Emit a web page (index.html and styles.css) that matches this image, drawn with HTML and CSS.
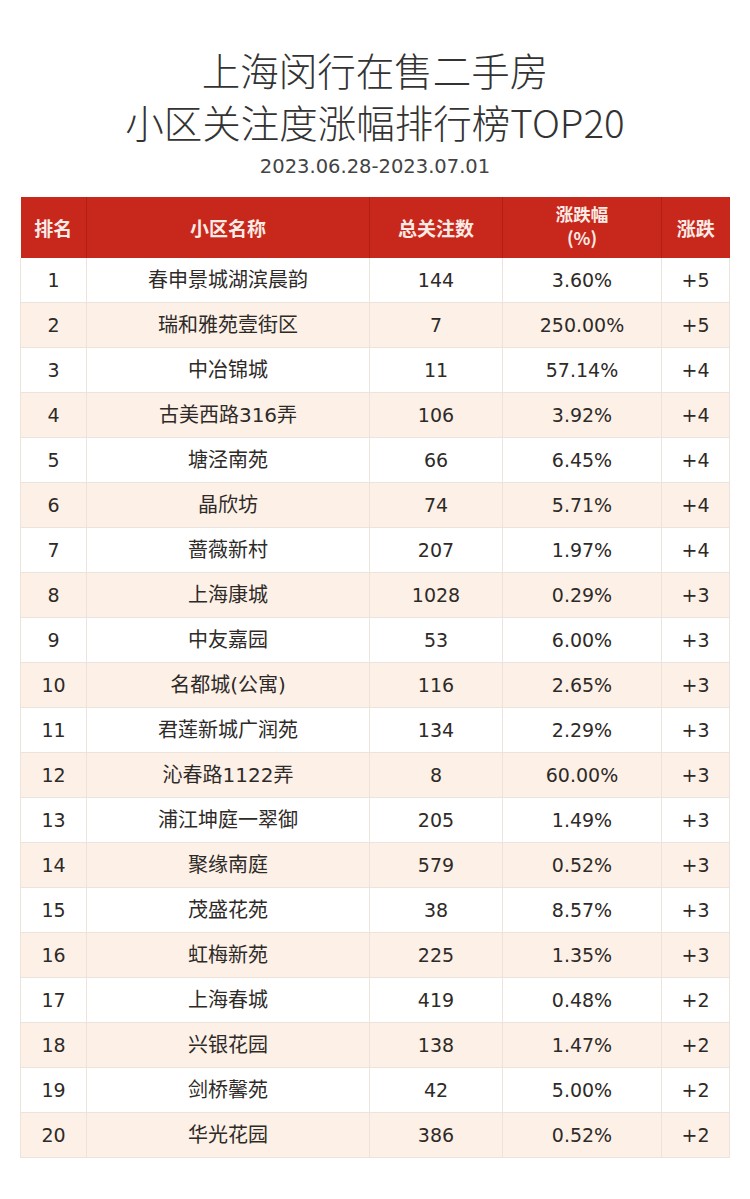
FILE: index.html
```html
<!DOCTYPE html>
<html lang="zh-CN">
<head>
<meta charset="utf-8">
<title>上海闵行在售二手房小区关注度涨幅排行榜TOP20</title>
<link rel="stylesheet" href="styles.css">
</head>
<body>
<div class="page">
  <h1 class="title">上海闵行在售二手房<br>小区关注度涨幅排行榜TOP20</h1>
  <div class="date">2023.06.28-2023.07.01</div>
  <table class="rank">
    <colgroup>
      <col class="c1"><col class="c2"><col class="c3"><col class="c4"><col class="c5">
    </colgroup>
    <thead>
      <tr><th>排名</th><th>小区名称</th><th>总关注数</th><th><div class="two"><span>涨跌幅</span><span>(%)</span></div></th><th>涨跌</th></tr>
    </thead>
    <tbody>
      <tr><td>1</td><td class="name">春申景城湖滨晨韵</td><td>144</td><td>3.60%</td><td>+5</td></tr>
      <tr><td>2</td><td class="name">瑞和雅苑壹街区</td><td>7</td><td>250.00%</td><td>+5</td></tr>
      <tr><td>3</td><td class="name">中冶锦城</td><td>11</td><td>57.14%</td><td>+4</td></tr>
      <tr><td>4</td><td class="name">古美西路316弄</td><td>106</td><td>3.92%</td><td>+4</td></tr>
      <tr><td>5</td><td class="name">塘泾南苑</td><td>66</td><td>6.45%</td><td>+4</td></tr>
      <tr><td>6</td><td class="name">晶欣坊</td><td>74</td><td>5.71%</td><td>+4</td></tr>
      <tr><td>7</td><td class="name">蔷薇新村</td><td>207</td><td>1.97%</td><td>+4</td></tr>
      <tr><td>8</td><td class="name">上海康城</td><td>1028</td><td>0.29%</td><td>+3</td></tr>
      <tr><td>9</td><td class="name">中友嘉园</td><td>53</td><td>6.00%</td><td>+3</td></tr>
      <tr><td>10</td><td class="name">名都城(公寓)</td><td>116</td><td>2.65%</td><td>+3</td></tr>
      <tr><td>11</td><td class="name">君莲新城广润苑</td><td>134</td><td>2.29%</td><td>+3</td></tr>
      <tr><td>12</td><td class="name">沁春路1122弄</td><td>8</td><td>60.00%</td><td>+3</td></tr>
      <tr><td>13</td><td class="name">浦江坤庭一翠御</td><td>205</td><td>1.49%</td><td>+3</td></tr>
      <tr><td>14</td><td class="name">聚缘南庭</td><td>579</td><td>0.52%</td><td>+3</td></tr>
      <tr><td>15</td><td class="name">茂盛花苑</td><td>38</td><td>8.57%</td><td>+3</td></tr>
      <tr><td>16</td><td class="name">虹梅新苑</td><td>225</td><td>1.35%</td><td>+3</td></tr>
      <tr><td>17</td><td class="name">上海春城</td><td>419</td><td>0.48%</td><td>+2</td></tr>
      <tr><td>18</td><td class="name">兴银花园</td><td>138</td><td>1.47%</td><td>+2</td></tr>
      <tr><td>19</td><td class="name">剑桥馨苑</td><td>42</td><td>5.00%</td><td>+2</td></tr>
      <tr><td>20</td><td class="name">华光花园</td><td>386</td><td>0.52%</td><td>+2</td></tr>
    </tbody>
  </table>
</div>
</body>
</html>
```

FILE: styles.css
```css
html, body {
  margin: 0;
  padding: 0;
  background: #ffffff;
}

.page {
  width: 750px;
  padding-top: 43px;
  font-family: "DejaVu Sans", "Noto Sans CJK SC", sans-serif;
  color: #2e2a27;
}

.title {
  margin: 0;
  text-align: center;
  font-family: "Noto Sans CJK SC", "DejaVu Sans", sans-serif;
  font-weight: 300;
  font-size: 38.5px;
  line-height: 52px;
  color: #333333;
}

.date {
  margin-top: 5px;
  text-align: center;
  font-size: 19.5px;
  line-height: 30px;
  color: #444444;
}

.rank {
  margin: 15px 0 0 20px;
  width: 709px;
  table-layout: fixed;
  border-collapse: collapse;
}

.c1 { width: 66px; }
.c2 { width: 283px; }
.c3 { width: 133px; }
.c4 { width: 159px; }
.c5 { width: 68px; }

.rank thead tr {
  height: 61px;
}

.rank th {
  height: 61px;
  padding: 0;
  background: #c8281b;
  color: #fbebe6;
  font-family: "Noto Sans CJK SC", sans-serif;
  font-weight: 700;
  font-size: 19px;
  line-height: 22px;
  text-align: center;
  vertical-align: middle;
  border-left: 1px solid #b41f14;
  box-sizing: border-box;
}

.rank th:first-child { border-left: none; }

.two {
  display: flex;
  flex-direction: column;
  align-items: center;
  gap: 2px;
  font-size: 17.5px;
  line-height: 22px;
  margin-top: -3px;
}

.rank td {
  height: 44px;
  padding: 0;
  text-align: center;
  font-size: 19px;
  line-height: 24px;
  border: 1px solid #ece3dc;
  border-top: none;
}

.rank td.name {
  font-size: 20px;
}

.rank tbody tr:nth-child(even) td {
  background: #fdf1e7;
}
```
